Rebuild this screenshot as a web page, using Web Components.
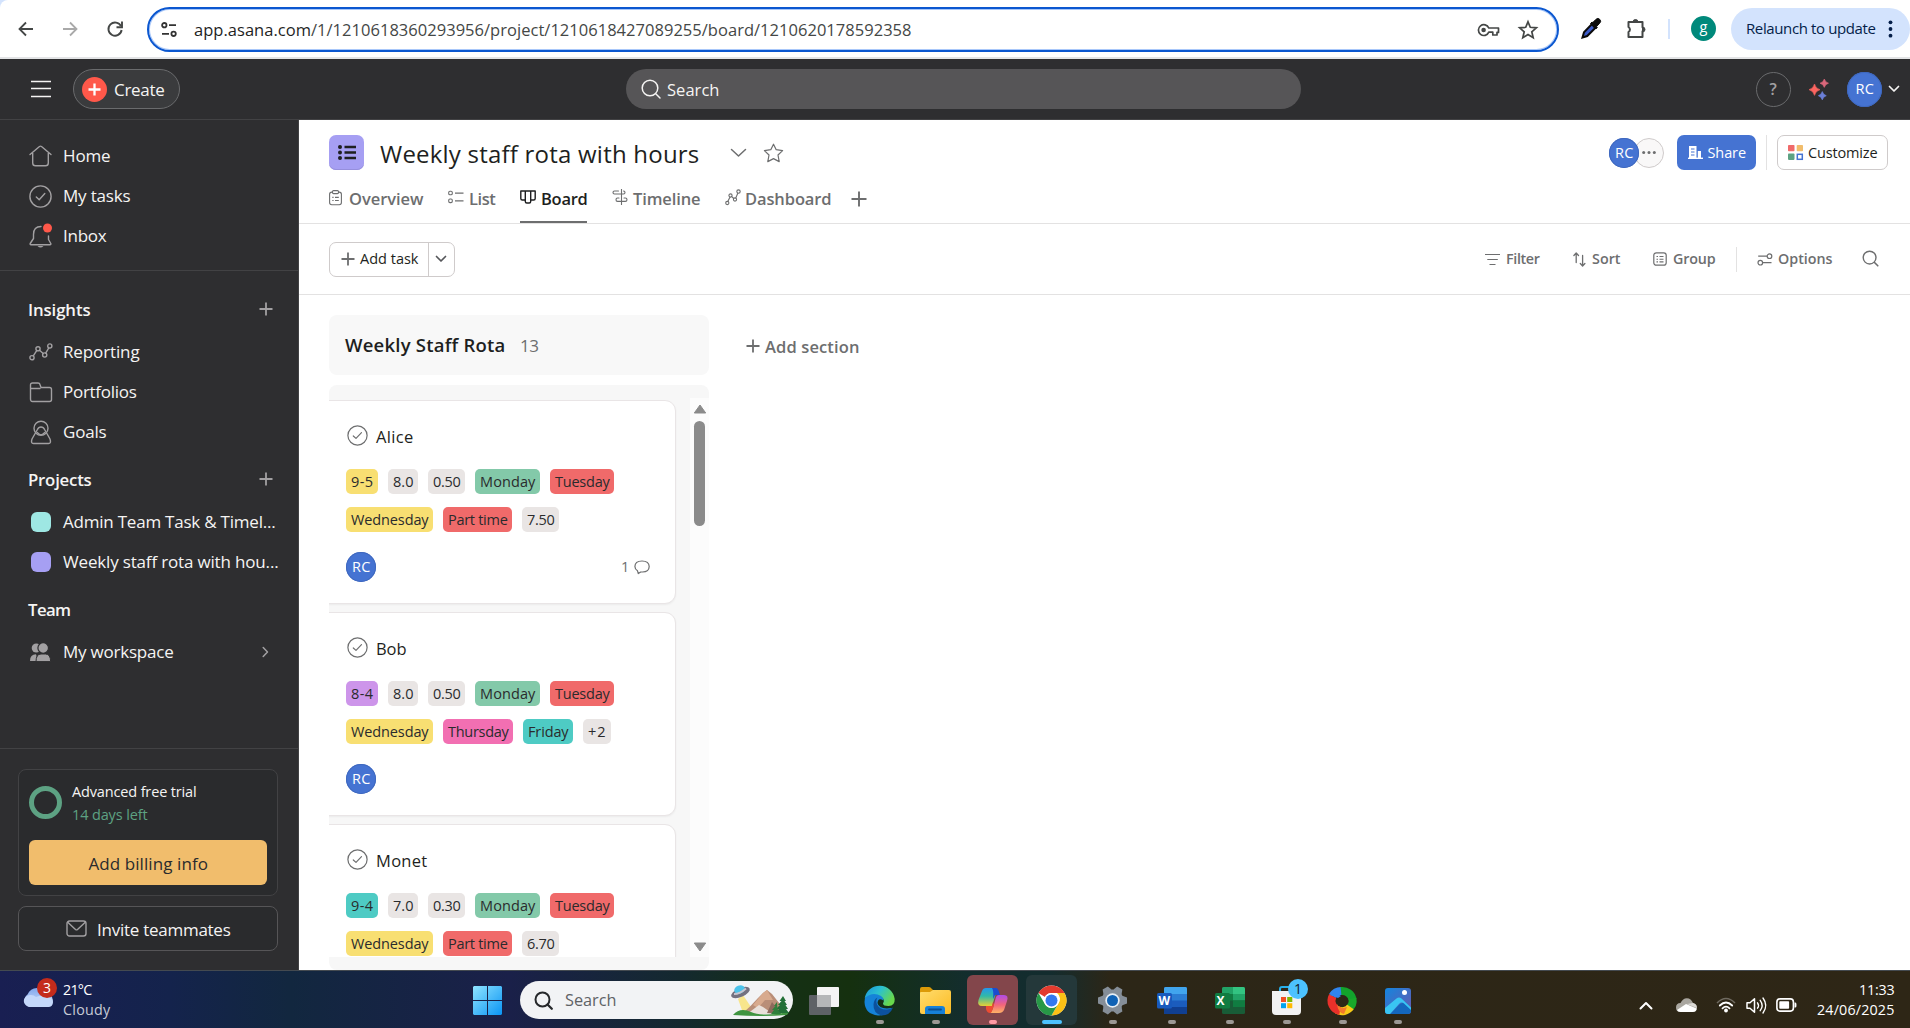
<!DOCTYPE html>
<html lang="en">
<head>
<meta charset="utf-8">
<title>Weekly staff rota with hours</title>
<style>
html,body{margin:0;height:100%;overflow:hidden}
body{font-family:"Open Sans","Noto Sans",sans-serif;background:#fff}
</style>
</head>
<body>
<rota-app></rota-app>
<script>
const def=(name,html,init)=>customElements.define(name,class extends HTMLElement{
  constructor(){super();this.attachShadow({mode:"open"})}
  connectedCallback(){
    if(this.shadowRoot.childNodes.length)return;
    const t=document.createElement("template");
    t.innerHTML=typeof html==="function"?html(this):html;
    this.shadowRoot.append(t.content.cloneNode(true));
    if(init)init(this);
  }
});

/* Each entry: width, height, SVG body. Strokes use currentColor. */
const S=(d,w=1.5)=>`<path d="${d}" fill="none" stroke="currentColor" stroke-width="${w}" stroke-linecap="round" stroke-linejoin="round"/>`;
const dot=(x,y,r,w=1.4)=>`<circle cx="${x}" cy="${y}" r="${r}" fill="none" stroke="currentColor" stroke-width="${w}"/>`;
const box=(x,y,w,h,s=1.3,r=1)=>`<rect x="${x}" y="${y}" width="${w}" height="${h}" rx="${r}" fill="none" stroke="currentColor" stroke-width="${s}"/>`;
const ICONS={
 back:[16,16,`<path d="M15 8H2M8 1.500L1.500 8L8 14.500" fill="none" stroke="currentColor" stroke-width="1.800"/>`],
 fwd:[16,16,`<path d="M1 8H14M8 1.500L14.500 8L8 14.500" fill="none" stroke="currentColor" stroke-width="1.800"/>`],
 reload:[16,16,`<path d="M14 5.200A6.600 6.600 0 1 0 14.600 9" fill="none" stroke="currentColor" stroke-width="1.900"/><path d="M15 .6V6.200H9.500" fill="none" stroke="currentColor" stroke-width="1.900"/>`],
 tune:[16,15,`${dot(3.300,3.200,2.200,1.800)}${dot(12.600,11.800,2.200,1.800)}<path d="M8 3.200H15M1 11.800H8" stroke="currentColor" stroke-width="1.800"/>`],
 key:[23,14,`<path d="M11.800 5H21.500V9.400H20V12H15.800V9.200H11.800A5.400 5.400 0 1 1 11.800 5Z" fill="none" stroke="currentColor" stroke-width="1.700" stroke-linejoin="round"/><circle cx="6.600" cy="7" r="2.300" fill="currentColor"/>`],
 star:[20,20,`<path d="M10 1.800L12.300 7.300L18.400 7.800L13.800 11.800L15.200 17.800L10 14.600L4.800 17.800L6.200 11.800L1.600 7.800L7.700 7.300Z" fill="none" stroke="currentColor" stroke-width="1.700"/>`],
 starThin:[21,20,S("M10.500 1.200L13.200 6.700L19.600 7.600L15 12L16.200 18.600L10.500 15.600L4.800 18.600L6 12L1.400 7.600L7.800 6.700Z",1.2)],
 dropper:[20,21,`<path d="M11 6L3 14.300L1.500 19.500L6.200 18L14.300 10Z" fill="#3c5bc9" stroke="#0b0b0b" stroke-width="2"/><path d="M9.500 5.500L14.800 11L16.300 9.500L15.600 8.500L18.700 5.200A2.600 2.600 0 0 0 15 1.300L11.800 4.500L11 4Z" fill="#0b0b0b" stroke="#0b0b0b"/>`],
 puzzle:[21,21,`<path d="M2.500 4H16.500V9.300A2.300 2.300 0 0 1 16.500 13.300V19H2.500V14A2.900 2.900 0 0 0 2.500 9Z" fill="none" stroke="currentColor" stroke-width="2" stroke-linejoin="round"/><path d="M7 4A2.500 2.500 0 0 1 12 4ZM16.500 9A2.500 2.500 0 0 1 16.500 14Z" fill="currentColor" stroke="currentColor"/>`],
 kebab:[5,18,`<circle cx="2.500" cy="2.300" r="1.900"/><circle cx="2.500" cy="9" r="1.900"/><circle cx="2.500" cy="15.700" r="1.900"/>`],
 menu:[20,18,`<path d="M0 1.500H20M0 8.500H20M0 16.500H20" stroke="currentColor" stroke-width="1.400"/>`],
 create:[25,25,`<circle cx="12.500" cy="12.500" r="12.500" fill="#ff584a"/><path d="M12.500 6.500V18.500M6.500 12.500H18.500" stroke="#fff" stroke-width="2.300"/>`],
 search:[20,20,`${dot(9,9,7.800,1.500)}${S("M15 15L19 19")}`],
 searchBold:[19,19,`${dot(8.500,8.500,7,2)}${S("M13.500 13.500L17.800 17.800",2.3)}`],
 search2:[17,17,`${dot(7.600,7.600,6.400,1.400)}${S("M12.500 12.500L15.800 15.800",1.6)}`],
 sparkle:[20,21,`<path d="M5.500 5Q6.600 9.600 11 10.700Q6.600 11.800 5.500 16.400Q4.400 11.800 0 10.700Q4.400 9.600 5.500 5Z" fill="#fc6560" stroke="#fc6560" stroke-width=".6"/><path d="M15.300 0Q16.200 3.300 19.500 4.200Q16.200 5.100 15.300 8.400Q14.400 5.100 11 4.200Q14.400 3.300 15.300 0Z" fill="#d9677b" stroke="#d9677b" stroke-width=".6"/><path d="M13.300 12.500Q14.200 15.800 17.300 16.700Q14.200 17.600 13.300 20.900Q12.400 17.600 9.300 16.700Q12.400 15.800 13.300 12.500Z" fill="#6b7fd7" stroke="#6b7fd7" stroke-width=".6"/>`],
 chev:[12,8,S("M1.500 1.500L6 6L10.500 1.500",1.7)],
 chevL:[17,10,S("M1.500 1.500L8.500 8L15.500 1.500",1.5)],
 chevR:[7,12,S("M1.200 1.500L5.500 6L1.200 10.500",1.5)],
 plus:[14,14,`<path d="M7 .5V13.500M.5 7H13.500" stroke="currentColor" stroke-width="1.800"/>`],
 plusL:[16,16,`<path d="M8 .5V15.500M.5 8H15.500" stroke="currentColor" stroke-width="1.900"/>`],
 home:[23,22,S("M1 9.500L10.500 1.500Q11.500 .8 12.500 1.500L22 9.500M3.700 8V18Q3.700 20.800 6.500 20.800H16.500Q19.300 20.800 19.300 18V8",1.4)],
 check:[23,23,`${dot(11.500,11.500,10.600,1.4)}${S("M7.300 12L10.200 14.800L15.800 8.500",1.4)}`],
 tick:[21,21,`${dot(10.500,10.500,9.600,1.200)}${S("M6.300 11L9 13.400L14.500 7.700",1.200)}`],
 bell:[23,24,`${S("M12 2.500Q4.500 2.500 4.500 10.500V14.500L1.200 19.500Q.8 20.800 2 20.800H21Q22.200 20.800 21.800 19.500L19.500 15.500V12",1.4)}<path d="M8.500 22H14.500Q11.500 25 8.500 22Z" fill="currentColor"/><circle cx="18.500" cy="4" r="4.500" fill="#ff584a"/>`],
 report:[24,18,`${dot(3,14.700,2.100)}${dot(9,5.800,2.100)}${dot(15.700,12,2.100)}${dot(20.800,3,2.100)}${S("M4.300 12.900L7.700 7.600M10.500 7.300L14.200 10.500M16.700 10.200L19.800 4.900",1.4)}`],
 folder:[24,21,S("M1.500 17V3Q1.500 1 3.500 1H9Q10.600 1 11 2.500L12 5.500H20.500Q22.500 5.500 22.500 7.500V17.500Q22.500 19.500 20.500 19.500H3.500Q1.500 19.500 1.500 17M1.500 6.500H11",1.4)],
 goal:[22,25,`${dot(11,8.300,7,1.400)}${S("M11 7Q8.500 7 7.400 9.500L2 19Q.5 23.500 3.500 23.500H18.500Q21.500 23.500 20 19L14.600 9.500Q13.500 7 11 7Z",1.4)}${S("M7.300 12.500Q11 17 14.700 12.500",1.200)}`],
 people:[21,19,`<circle cx="6.300" cy="5" r="4.600" fill="currentColor"/><path d="M0 18Q0 11.300 6 11.300L8 18Z" fill="currentColor"/><circle cx="13.200" cy="5" r="5.300" fill="currentColor" stroke="#2e2e30" stroke-width="1.200"/><path d="M6 18.600Q6 11 11 11H15.500Q20.600 11 20.600 18.600Z" fill="currentColor" stroke="#2e2e30" stroke-width="1"/>`],
 mail:[21,17,`${box(1,1,19,15,1.4,2.5)}${S("M2 2.500L9.500 9.500Q10.500 10.300 11.500 9.500L19 2.500",1.4)}`],
 list:[18,17,`<circle cx="2" cy="3" r="2"/><circle cx="2" cy="8.500" r="2"/><circle cx="2" cy="14" r="2"/><path d="M6.500 3H18M6.500 8.500H18M6.500 14H18" stroke="currentColor" stroke-width="2.500"/>`],
 overview:[13,16,`${box(.6,2.100,11.800,12.700,1.100,2.200)}<rect x="3.500" y=".6" width="6" height="3" rx="1" fill="#fff" stroke="currentColor" stroke-width="1.100"/><path d="M3.300 7.300H4.600M6 7.300H9.800M3.300 10.500H4.600M6 10.500H9.800" stroke="currentColor" stroke-width="1.200"/>`],
 listTab:[16,15,`${box(.7,1.200,3.600,3.600,1.100,1.300)}${box(.7,9,3.600,3.600,1.100,1.300)}<path d="M7 3.100H15.500M7 10.900H15.500" stroke="currentColor" stroke-width="1.100"/>`],
 board:[16,15,`${S("M.8 1H15.200V8.500Q15.200 10 13.700 10H10.700M.8 1V8.500Q.8 10 2.300 10H5.300M5.300 1V11.500Q5.300 13 6.800 13H9.200Q10.700 13 10.700 11.500V1",1.400)}`],
 timeline:[16,17,`<path d="M9.500 0V16" stroke="currentColor" stroke-width="1.100"/>${S("M6.500 2H2.500Q1 2 1 3.500T2.500 5H11.500Q13 5 13 3.500T11.500 2M7 9H5.500Q4 9 4 10.700T5.500 12.400H13.300Q15 12.400 15 10.700T13.300 9H12",1.100)}`],
 dash:[16,17,`${dot(2.300,14,1.600,1.100)}${dot(5.500,6.500,1.600,1.100)}${dot(10,10.500,1.600,1.100)}${dot(13.500,2.600,1.700,1.100)}${S("M2.900 12.300L4.900 8.200M6.800 7.700L8.700 9.500M10.800 8.900L12.800 4.300",1.100)}`],
 share:[15,13,`<path d="M1 12V0H8.500V12ZM9.800 12V5H13V12Z" fill="currentColor"/><path d="M0 12.300H15" stroke="currentColor" stroke-width="1.400"/><path d="M3 3H6.500M3 6H6.500M3 9H6.500" stroke="#4573d2" stroke-width="1.200"/>`],
 custom:[15,15,`<rect width="6.500" height="6.300" rx=".8" fill="#f06a6a"/><rect x="8.700" width="6.300" height="6.300" rx=".8" fill="#f1bd6c"/><rect y="8.600" width="6.500" height="6.300" rx=".8" fill="#5da283"/><rect x="9.300" y="9.300" width="5" height="5" fill="#fff" stroke="#4573d2" stroke-width="1.500"/>`],
 filter:[15,13,`<path d="M0 1.500H15M2.300 6.500H12.800M4.500 11.500H10.500" stroke="currentColor" stroke-width="1.200"/>`],
 sort:[13,15,S("M3.200 10.500V1.200M.9 3.500L3.200 1L5.500 3.500M9.600 3.500V13.800M7.300 11.500L9.600 14L11.900 11.500",1.300)],
 group:[14,14,`${box(.8,.8,12.400,12.400,1.200,2.500)}<path d="M3.500 4.500H5M6.500 4.500H10.500M3.500 7.200H5M6.500 7.200H10.500M3.500 9.900H5M6.500 9.900H10.500" stroke="currentColor" stroke-width="1.100"/>`],
 options:[16,13,`${dot(12.500,3.200,2.300,1.200)}${dot(3.300,9.700,2.300,1.200)}<path d="M1.200 3.200H10M5.800 9.700H14.500" stroke="currentColor" stroke-width="1.200"/>`],
 bubble:[16,15,S("M4.300 13.600L3.500 10.800Q.9 9 .9 6.500Q1 1 8 1T15.200 6.500Q15 12 8.500 12Q7.500 12 6.700 12Z",1.200)],
 dots:[14,3,`<circle cx="1.700" cy="1.500" r="1.500"/><circle cx="7" cy="1.500" r="1.500"/><circle cx="12.300" cy="1.500" r="1.500"/>`],
 up:[14,10,`<path d="M7 1L12.700 9H1.300Z" fill="currentColor" stroke="currentColor" stroke-linejoin="round"/>`],
 down:[14,10,`<path d="M7 9L12.700 1H1.300Z" fill="currentColor" stroke="currentColor" stroke-linejoin="round"/>`],
 cloud:[31,24,`<defs><linearGradient id="g" x2="0" y2="1"><stop stop-color="#7fa6ec"/><stop offset="1" stop-color="#d5e3fb"/></linearGradient></defs><path d="M7 23A7 7 0 0 1 4.500 10.500A11 11 0 0 1 24 9.500A7 7 0 0 1 25 23Z" fill="url(#g)"/><path d="M7 23A7 6 0 1 1 13 13Q20 10 23 13Q30 13 30 18T25 23Z" fill="#c4d8fa"/>`],
 win:[29,29,`<defs><linearGradient id="g" gradientUnits="userSpaceOnUse" x1="0" y1="0" x2="29" y2="29"><stop stop-color="#8fe4ff"/><stop offset="1" stop-color="#0a94f4"/></linearGradient></defs><path d="M1 0H14V14H0V1ZM15 0H28L29 1V14H15ZM0 15H14V29H1L0 28ZM15 15H29V28L28 29H15Z" fill="url(#g)"/>`],
 scene:[58,31,`<path d="M12 10L7 14L12 28L22 25Z" fill="#f8e58c"/><path d="M12 28Q20 21 27 13L32 8L36 5L41 9L56 28Z" fill="#b98e78"/><path d="M22 20L32 8L36 5L42 15L34 15L27 23Z" fill="#d8aa8e"/><path d="M16 29L28 20L32 22L42 29Z" fill="#e9e0da"/><path d="M36 28L41 17L50 29Z" fill="#8d6a5d"/><path d="M2 30Q9 22 20 27T58 27L56 30Q30 32 2 30Z" fill="#3f9440"/><path d="M52 11L48.500 16H50.500L47 20H49L45 24H48L44 28H58L55 24H57L54.500 20H56L53.500 16H55Z" fill="#237038"/><path d="M46 17L43 21H44.500L41 25H43L40 29H50L46.500 24Z" fill="#2f7f3b"/><ellipse cx="9.500" cy="7.500" rx="10" ry="4.500" transform="rotate(-24 9.500 7.500)" fill="#74717f"/><ellipse cx="8.500" cy="4.500" rx="5.500" ry="4" transform="rotate(-22 8.500 4.500)" fill="#4cc3ea"/><path d="M3 9Q9 9 15 3.500" fill="none" stroke="#c8c5d0" stroke-width="1.800"/>`],
 taskview:[30,28,`<rect y="8" width="22" height="20" rx="1" fill="#5e6266"/><rect x="8" width="22" height="20" rx="1" fill="#f4f4f4"/><path d="M8 8H22V20H8Z" fill="#b5b7b8"/>`],
 edge:[31,31,`<defs><linearGradient id="g" x2="1" y2=".5"><stop stop-color="#1a91df"/><stop offset=".5" stop-color="#2bc1cf"/><stop offset="1" stop-color="#68d84c"/></linearGradient></defs><path d="M.5 17Q0 7 11 8Q20 9 19.500 15.500Q14 12 13.500 18Q15 25 28 23Q23 31 14 30.500Q1 29 .5 17Z" fill="#1583d8"/><path d="M.7 13A15.200 15.200 0 0 1 30.700 14Q31 21 24.500 21Q19 21 19 18.500Q21.500 14.500 17 11Q9 6 .7 13Z" fill="url(#g)"/><path d="M13.500 12.500Q11.500 15 13 19.500Q16 25 23 24.500Q26 24.300 29 22.500Q26 30.500 17.500 30.500Q9 28 9.500 19.500Q10 14 13.500 12.500Z" fill="#0c519c"/>`],
 folderWin:[31,27,`<defs><linearGradient id="g" x2="1" y2="1"><stop stop-color="#ffdc6e"/><stop offset="1" stop-color="#fcbb22"/></linearGradient></defs><path d="M0 2Q0 0 2 0H9Q10.500 0 12 2L14 4H28V12H0Z" fill="#dc9a08"/><path d="M0 6Q0 5 1 5H10L13 3H29Q31 3 31 5V25Q31 27 29 27H2Q0 27 0 25Z" fill="url(#g)"/><path d="M5 27V22Q5 19 8 19H22Q25 19 25 22V27Z" fill="#1681d8"/><path d="M9 22.500H21" stroke="#0b4f90" stroke-width="1.800" stroke-linecap="round"/>`],
 copilot:[30,26,`<defs><linearGradient id="g" x2="0" y2="1"><stop stop-color="#2496ee"/><stop offset=".45" stop-color="#31b9a7"/><stop offset="1" stop-color="#e7cf35"/></linearGradient><linearGradient id="h" x2="0" y2="1"><stop stop-color="#b04be8"/><stop offset=".55" stop-color="#f2657b"/><stop offset="1" stop-color="#ffb365"/></linearGradient></defs><path d="M8 0H17Q20 0 18 5L14 18H4Q-1 18 .5 12L4 3Q5 0 8 0Z" fill="url(#g)"/><path d="M14 0H18Q20 0 21 4L22 7H17L15 11Q16 3 14 0Z" fill="#1b4bcf"/><path d="M21 7H26Q31 7 29 13L26 22Q24.500 25 21 25H12Q14 24 15 20L18 9Q19 7 21 7Z" fill="url(#h)"/><path d="M8 18H14L15 14L16 17L14 23Q13.500 25 12 25Q9 25 8 21Z" fill="#ee4c32"/>`],
 chrome:[31,31,`<circle cx="15.500" cy="15.500" r="15" fill="#fff"/><path d="M2.500 8A15 15 0 0 1 28.500 8H15.500A7.500 7.500 0 0 0 9 12Z" fill="#e33b2e"/><path d="M28.500 8A15 15 0 0 1 15.500 30.500L22 19.200A7.500 7.500 0 0 0 21 8Z" fill="#fbc116"/><path d="M2.500 8A15 15 0 0 0 15.500 30.500L21.500 20A7.500 7.500 0 0 1 9 19.200Z" fill="#279847"/><circle cx="15.500" cy="15.500" r="7.500" fill="#fff"/><circle cx="15.500" cy="15.500" r="6" fill="#3478ee"/>`],
 gear:[31,29,`<g fill="#858e98">${[30,90,150].map(a=>`<path d="M11 4L12.500 0H18.500L20 4V25L18.500 29H12.500L11 25Z" transform="rotate(${a} 15.500 14.500)"/>`).join("")}<circle cx="15.500" cy="14.500" r="11"/></g><circle cx="15.500" cy="14.500" r="7.200" fill="#e6eef5"/><circle cx="15.500" cy="14.500" r="5.500" fill="#0f62b5"/>`],
 word:[30,27,`<rect x="7" width="23" height="27" rx="1.500" fill="#1b5cbd"/><path d="M7 1.500Q7 0 8.500 0H28.500Q30 0 30 1.500V7H7Z" fill="#41a5ee"/><path d="M7 7H30V13.500H7Z" fill="#2b7cd3"/><path d="M7 20H30V25.500Q30 27 28.500 27H8.500Q7 27 7 25.500Z" fill="#103f91"/><rect y="6" width="15" height="15.500" rx="1.500" fill="#185abd"/>`],
 excel:[30,27,`<rect x="7" width="23" height="27" rx="1.500" fill="#185c37"/><path d="M7 1.500Q7 0 8.500 0H18V7H7Z" fill="#21a366"/><path d="M18 0H28.500Q30 0 30 1.500V7H18Z" fill="#33c481"/><path d="M7 7H18V13.500H7Z" fill="#107c41"/><path d="M18 7H30V13.500H18Z" fill="#21a366"/><path d="M18 13.500H30V20H18Z" fill="#107c41"/><rect y="6" width="15" height="15.500" rx="1.500" fill="#107c41"/>`],
 store:[29,29,`<path d="M8 6V3Q8 1 10 1H19Q21 1 21 3V6" fill="none" stroke="#28afea" stroke-width="2"/><path d="M0 5H29V25Q29 29 25 29H4Q0 29 0 25Z" fill="#f2f2f2"/><path d="M9 11H14V16H9Z" fill="#f25022"/><path d="M15.200 11H20.300V16H15.200Z" fill="#7fba00"/><path d="M9 17.200H14V22.200H9Z" fill="#00a4ef"/><path d="M15.200 17.200H20.300V22.200H15.200Z" fill="#ffb900"/>`],
 swirl:[29,28,`<g fill="none" stroke-width="8"><path d="M4.500 9A10.300 10.300 0 0 1 14 4" stroke="#2f85ee"/><path d="M13 4A10.300 10.300 0 0 1 24.500 12.500" stroke="#12a32c"/><path d="M24.500 11.500A10.300 10.300 0 0 1 20 22" stroke="#19a82a"/><path d="M22.500 20A10.300 10.300 0 0 1 9 22.800" stroke="#f9c917"/><path d="M12 24A10.300 10.300 0 0 1 4.700 9" stroke="#e9302a"/></g><path d="M1.500 8Q8 5 13 9L10 11Q6 9 1.500 8Z" fill="#2f85ee"/><path d="M9 17Q12 23 19 20L16 27Q10 26 9 17Z" fill="#f4792b"/>`],
 photos:[26,26,`<defs><linearGradient id="g" x2="1" y2="1"><stop stop-color="#1385df"/><stop offset="1" stop-color="#6a58ad"/></linearGradient></defs><rect width="26" height="26" rx="3" fill="url(#g)"/><path d="M5 26L15 16L20 14L26 20V23Q26 26 23 26Z" fill="#1467bd"/><path d="M0 20L11.500 10.500Q14 8.500 16.500 10.500L26 19.500V22L19 15.500Q16.500 13.500 14 16L5 26H3Q0 26 0 23Z" fill="#39c5f3"/><circle cx="19.500" cy="4.500" r="2.500" fill="#fff"/>`],
 trayUp:[14,9,S("M1.500 7.500L7 2L12.500 7.500",2)],
 onedrive:[21,14,`<path d="M4.500 14Q0 14 0 9.500T4.500 5Q7 0 11 .2T17 5Q21 6 21 9.700T17 14Z" fill="#a9a69f"/><path d="M1 12L10 6L20.500 10.500Q20.500 14 16.500 14H4.500Q2 14 1 12Z" fill="#fff"/><path d="M11 6L17 5Q21 6 20.800 10Z" fill="#dcdad6"/>`],
 wifi:[20,16,`<path d="M1 6Q10-3 19 6" fill="none" stroke="#6f6a60" stroke-width="1.600"/>${S("M3.800 8.500Q10 2.500 16.200 8.500M6.500 11.300Q10 8 13.500 11.300",1.8)}<circle cx="10" cy="13.500" r="1.900" fill="currentColor"/>`],
 sound:[21,17,`${S("M1 5.800H4L8.500 1.800V15.200L4 11.200H1Z",1.5)}${S("M11.500 5.800Q13.500 8.500 11.500 11.200M14.200 3.300Q18 8.500 14.200 13.700M17 1Q22.500 8.500 17 16",1.4)}`],
 battery:[21,14,`${box(.9,.9,16.500,12.200,1.6,3)}<rect x="3.300" y="3.300" width="9.800" height="7.400" rx=".8" fill="currentColor"/><path d="M18.500 4.500H19.500Q20.500 4.500 20.500 7T19.500 9.500H18.500Z" fill="currentColor"/>`]
};

def("ui-icon",h=>{const [w,ht,b]=ICONS[h.getAttribute("name")];
 return `<style>:host{display:block;flex:none;width:${w}px;height:${ht}px}svg{display:block;overflow:visible}</style><svg width="${w}" height="${ht}" viewBox="0 0 ${w} ${ht}" fill="currentColor">${b}</svg>`});

/* Single line of text, tracked so that it fills the width given in "w". */
def("ui-text",h=>`<style>:host{display:block;flex:none;white-space:nowrap;padding-top:1px;font-size:${h.getAttribute("s")||17}px;font-weight:${h.getAttribute("b")||400};line-height:1.300;width:${h.getAttribute("w")}px}span{display:inline-block}</style><span><slot></slot></span>`,
 h=>queueMicrotask(()=>{const s=h.shadowRoot.querySelector("span"),w=+h.getAttribute("w"),n=h.textContent.length;
  if(w&&n)s.style.letterSpacing=((w+.5-s.getBoundingClientRect().width)/n).toFixed(3)+"px";}));

def("user-avatar",h=>{const d=h.getAttribute("size")||30;return `<style>:host{display:flex;flex:none;align-items:center;justify-content:center;width:${d}px;height:${d}px;border-radius:50%;background:#4573d2;box-shadow:inset 0 0 0 1px #3f68be;color:#fff}</style><ui-text s="14.500" w="18">RC</ui-text>`});

def("browser-bar",`<style>
:host{display:block;height:57px;background:#d3e3fd;border-bottom:2px solid #e3e4e6;color:#444746}
.bar{box-sizing:border-box;height:57px;background:#fff;border-radius:8px 0 0 0;display:flex;align-items:center;padding-left:18px}
.addr{box-sizing:border-box;width:1412px;height:45px;border:2px solid #0b57d0;border-radius:23px;margin:2px 0 0 24px;padding-left:12px;display:flex;align-items:center;box-shadow:inset 0 0 0 1px #a8c7fa}
.pill{display:flex;align-items:center;box-sizing:border-box;width:179px;height:42px;border-radius:21px;background:#d3e3fd;color:#041e49;padding-left:15px;margin-left:15px}
.g{width:25px;height:25px;border-radius:50%;background:#00897b;color:#fff;display:flex;align-items:center;justify-content:center;margin-left:21px}
.sep{width:2px;height:20px;background:#d3e3fd;margin-left:21px}
</style><div class="bar">
<ui-icon name="back"></ui-icon><ui-icon name="fwd" style="margin-left:28px;color:#a9a9a9"></ui-icon><ui-icon name="reload" style="margin-left:29px"></ui-icon>
<div class="addr"><ui-icon name="tune" style="color:#333"></ui-icon><ui-text w="717" s="16.500" style="margin-left:17px"><span style="color:#1f1f1f">app.asana.com</span>/1/1210618360293956/project/1210618427089255/board/1210620178592358</ui-text>
<ui-icon name="key" style="margin-left:566px"></ui-icon><ui-icon name="star" style="margin-left:18px"></ui-icon></div>
<ui-icon name="dropper" style="margin-left:22px"></ui-icon><ui-icon name="puzzle" style="margin-left:25px"></ui-icon><div class="sep"></div>
<div class="g"><ui-text s="14.500" w="8" style="margin-top:-4px">g</ui-text></div>
<div class="pill"><ui-text s="15" w="129">Relaunch to update</ui-text><ui-icon name="kebab" style="margin-left:13px"></ui-icon></div>
</div>`);

def("app-header",`<style>
:host{display:flex;align-items:center;box-sizing:border-box;height:61px;background:#2e2e30;border-bottom:1px solid #424244;color:#f5f4f3;padding-left:31px}
.create{display:flex;align-items:center;box-sizing:border-box;width:107px;height:40px;border:1px solid #6a6b6d;border-radius:20px;background:#3a3b3d;margin-left:22px;padding-left:8px}
.search{display:flex;align-items:center;box-sizing:border-box;width:675px;height:40px;border-radius:20px;background:#565557;margin-left:446px;padding-left:15px}
.help{display:flex;align-items:center;justify-content:center;box-sizing:border-box;width:35px;height:35px;border:1px solid #6a6b6d;border-radius:50%;margin-left:455px;color:#a2a0a2}
</style><ui-icon name="menu"></ui-icon>
<div class="create"><ui-icon name="create"></ui-icon><ui-text w="50" style="margin:1px 0 0 7px">Create</ui-text></div>
<div class="search"><ui-icon name="search"></ui-icon><ui-text w="52" s="16.500" style="margin-left:6px">Search</ui-text></div>
<div class="help"><ui-text s="16" b="600" w="8">?</ui-text></div>
<ui-icon name="sparkle" style="margin-left:18px"></ui-icon>
<user-avatar size="35" style="margin-left:18px"></user-avatar>
<ui-icon name="chev" style="margin-left:6px"></ui-icon>`);

def("side-link",h=>`<style>
:host{display:flex;align-items:center;height:40px;padding-left:28px;color:#f5f4f3}
.ic{width:25px;display:flex;justify-content:center;color:#a2a0a2;flex:none}
.sq{width:20px;height:20px;border-radius:6px;background:${h.getAttribute("color")}}
ui-text{margin:-1px 0 0 10px}.c{margin-left:auto;margin-right:29px;color:#a2a0a2}
</style><div class="ic">${h.hasAttribute("icon")?`<ui-icon name="${h.getAttribute("icon")}"></ui-icon>`:`<div class="sq"></div>`}</div><ui-text w="${h.getAttribute("w")}">${h.textContent.replace("&","&amp;")}</ui-text>${h.hasAttribute("more")?`<ui-icon class="c" name="chevR"></ui-icon>`:""}`);

def("side-heading",h=>`<style>:host{display:flex;align-items:center;justify-content:space-between;height:40px;padding:0 25px 0 28px;color:#f5f4f3}ui-icon{color:#a2a0a2;margin-top:-2px}ui-text{margin-top:-1px}</style><ui-text b="600" s="16.800" w="${h.getAttribute("w")}">${h.textContent}</ui-text>${h.hasAttribute("add")?`<ui-icon name="plus"></ui-icon>`:""}`);

def("side-bar",`<style>
:host{display:flex;flex-direction:column;box-sizing:border-box;width:299px;flex:none;background:#2e2e30;border-right:1px solid #424244;color:#f5f4f3}
.a{padding:16px 0 14px;border-bottom:1px solid #424244}
.b{flex:1;padding-top:19px}
.f{box-sizing:border-box;height:222px;border-top:1px solid #424244;padding:20px 20px 0 18px}
.card{box-sizing:border-box;height:127px;border:1px solid #424244;border-radius:8px;background:#2a2b2d;padding:15px 10px 0}
.row{display:flex;align-items:center;gap:10px;height:46px;margin-top:-5px}
.ring{box-sizing:border-box;width:33px;height:33px;border:5px solid #5da283;border-radius:50%;margin-top:-2px}
.lines{display:flex;flex-direction:column;gap:3px}
.btn{display:flex;align-items:center;justify-content:center;box-sizing:border-box;height:45px;border-radius:6px}
.bill{background:#f1bd6c;color:#2a2b2d;margin-top:14px}
.inv{border:1px solid #565557;border-radius:8px;background:#2a2b2d;margin-top:10px;gap:10px}
</style>
<div class="a"><side-link icon="home" w="47">Home</side-link><side-link icon="check" w="67">My tasks</side-link><side-link icon="bell" w="43">Inbox</side-link></div>
<div class="b">
<side-heading w="62" add>Insights</side-heading><div style="height:2px"></div>
<side-link icon="report" w="76">Reporting</side-link><side-link icon="folder" w="73">Portfolios</side-link><side-link icon="goal" w="43">Goals</side-link>
<div style="height:8px"></div><side-heading w="63" add>Projects</side-heading><div style="height:2px"></div>
<side-link color="#9ee7e3" w="212">Admin Team Task &amp; Timel...</side-link><side-link color="#a69ff3" w="215">Weekly staff rota with hou...</side-link>
<div style="height:8px"></div><side-heading w="42">Team</side-heading><div style="height:2px"></div>
<side-link icon="people" w="110" more>My workspace</side-link></div>
<div class="f"><div class="card"><div class="row"><div class="ring"></div><div class="lines"><ui-text s="14.500" w="124">Advanced free trial</ui-text><ui-text s="14.500" w="75" style="color:#5da283">14 days left</ui-text></div></div>
<div class="btn bill"><ui-text w="119" style="margin-top:2px">Add billing info</ui-text></div></div>
<div class="btn inv"><ui-icon name="mail" style="color:#a2a0a2"></ui-icon><ui-text w="133" style="margin-top:2px">Invite teammates</ui-text></div></div>`);

def("tab-item",h=>`<style>:host{display:flex;align-items:center;box-sizing:border-box;height:49px;gap:5px;color:#6d6e6f;${h.hasAttribute("active")?"color:#1e1f21;border-bottom:2px solid #6d6e6f":"padding-bottom:2px"}}ui-text{margin-top:1px}</style><ui-icon name="${h.getAttribute("icon")}"></ui-icon><ui-text b="600" s="16.500" w="${h.getAttribute("w")}">${h.textContent}</ui-text>`);

def("project-header",`<style>
:host{display:block;box-sizing:border-box;height:104px;border-bottom:1px solid #e3e2e2;padding:15px 22px 0 30px;color:#1e1f21}
.top,.tabs{display:flex;align-items:center}.top{height:35px}
.pi{width:35px;height:35px;border-radius:7px;background:#a69ff3;display:flex;align-items:center;justify-content:center;color:#1e1f21;box-shadow:inset 0 -1px #968fdd}
.dots{display:flex;align-items:center;justify-content:center;box-sizing:border-box;width:30px;height:30px;border:1px solid #cfcbcb;border-radius:50%;background:#f9f8f8;color:#6d6e6f;margin-left:-5px}
user-avatar{z-index:1;margin-left:auto}
.btn{display:flex;align-items:center;justify-content:center;box-sizing:border-box;height:35px;border-radius:7px;gap:5px}
.share{width:79px;background:#4573d2;color:#fff;margin-left:13px}
.cust{width:111px;border:1px solid #cfcbcb;margin-left:10px}
.sep{width:1px;height:35px;background:#e3e2e2;margin-left:10px}
.tabs{height:49px;margin-top:4px}
</style>
<div class="top"><div class="pi"><ui-icon name="list"></ui-icon></div><ui-text s="24" b="500" w="319" style="margin:1px 0 0 16px">Weekly staff rota with hours</ui-text>
<ui-icon name="chevL" style="margin-left:31px;color:#6d6e6f"></ui-icon><ui-icon name="starThin" style="margin-left:16px;color:#6d6e6f"></ui-icon>
<user-avatar></user-avatar><div class="dots"><ui-icon name="dots"></ui-icon></div>
<div class="btn share"><ui-icon name="share"></ui-icon><ui-text s="14.500" w="38">Share</ui-text></div><div class="sep"></div>
<div class="btn cust"><ui-icon name="custom"></ui-icon><ui-text s="14.500" w="69">Customize</ui-text></div></div>
<div class="tabs"><tab-item icon="overview" style="gap:7px" w="74">Overview</tab-item><tab-item icon="listTab" w="26" style="margin-left:25px">List</tab-item><tab-item active icon="board" w="46" style="margin-left:25px">Board</tab-item><tab-item icon="timeline" w="67" style="margin-left:25px">Timeline</tab-item><tab-item icon="dash" w="86" style="margin-left:25px;gap:4px">Dashboard</tab-item><ui-icon name="plusL" style="margin:0 0 0 20px;color:#6d6e6f"></ui-icon></div>`);

def("view-toolbar",`<style>
:host{display:flex;align-items:center;box-sizing:border-box;height:71px;border-bottom:1px solid #e3e2e2;padding:0 31px 0 30px;color:#6d6e6f}
.add{display:flex;align-items:center;box-sizing:border-box;width:126px;height:35px;border:1px solid #cfcbcb;border-radius:7px;padding-left:11px;margin:0 auto 0 0}
.add i{width:1px;height:33px;background:#cfcbcb;margin:0 6px 0 10px}
.sep{width:1px;height:25px;background:#e3e2e2;margin:0 20px 0 21px}
ui-text{margin-top:-1px}
</style><div class="add"><ui-icon name="plus"></ui-icon><ui-text s="14.500" w="58" style="margin-left:5px;color:#1e1f21">Add task</ui-text><i></i><ui-icon name="chev" style="color:#55565a"></ui-icon></div>
<ui-icon name="filter"></ui-icon><ui-text s="14.300" b="600" w="33" style="margin:-1px 34px 0 6px">Filter</ui-text>
<ui-icon name="sort"></ui-icon><ui-text s="14.300" b="600" w="28" style="margin:-1px 33px 0 6px">Sort</ui-text>
<ui-icon name="group"></ui-icon><ui-text s="14.300" b="600" w="42" style="margin:-1px 0 0 6px">Group</ui-text><div class="sep"></div>
<ui-icon name="options"></ui-icon><ui-text s="14.300" b="600" w="54" style="margin:-1px 30px 0 5px">Options</ui-text><ui-icon name="search2" style="margin-top:-1px"></ui-icon>`);

const TAGW={"9-5":[32,"#f8df72"],"8-4":[32,"#cd95ea"],"9-4":[32,"#4ecbc4"],"8.0":[30],"7.0":[30],"0.50":[37],"0.30":[37],"7.50":[37],"6.70":[37],"+2":[28],Monday:[65,"#83c9a9"],Tuesday:[64,"#f06a6a"],Wednesday:[87,"#f8df72"],"Part time":[69,"#f06a6a"],Thursday:[70,"#f26fb2"],Friday:[50,"#4ecbc4"]};
def("task-tag",h=>{const [w,c="#e9e5e4"]=TAGW[h.textContent];return `<style>:host{display:flex;align-items:center;justify-content:center;flex:none;width:${w}px;height:25px;border-radius:5px;background:${c};color:#2a2b2d}</style><ui-text s="14.500" w="${w-10}">${h.textContent}</ui-text>`});

def("task-card",h=>{const row=a=>`<div class="tags">${h.getAttribute(a).split(",").map(t=>`<task-tag>${t}</task-tag>`).join("")}</div>`;
const comments=h.hasAttribute("comments")?`<div class="cm"><ui-text s="14.500" w="8">${h.getAttribute("comments")}</ui-text><ui-icon name="bubble"></ui-icon></div>`:"";
return `<style>
:host{display:block;flex:none;box-sizing:border-box;height:204px;width:358px;margin:0 0 8px -11px;border:1px solid #e9e5e6;border-radius:11px;background:#fff;box-shadow:0 1px 2px #0000000d;color:#1e1f21;padding:24px 25px 0 27px}
.name,.tags,.foot{display:flex;align-items:center}.name{height:21px;gap:8px;margin-bottom:23px;padding-left:1px}
.name ui-icon{color:#6d6e6f}.tags{height:25px;gap:10px;margin-bottom:13px}.foot{height:30px;margin-top:20px;color:#6d6e6f}
.cm{display:flex;align-items:center;gap:5px;margin-left:auto}
</style><div class="name"><ui-icon name="tick"></ui-icon><ui-text s="16.500" w="${h.getAttribute("w")}" style="margin-top:1px">${h.getAttribute("name")}</ui-text></div>${row("one")}${row("two")}${h.hasAttribute("bare")?"":`<div class="foot"><user-avatar></user-avatar>${comments}</div>`}`});

def("board-view",`<style>
:host{display:flex;flex:1;min-height:0;padding:20px 0 0 30px;color:#1e1f21}
.col{width:380px;display:flex;flex-direction:column;min-height:0}
.head{display:flex;align-items:center;box-sizing:border-box;height:60px;flex:none;background:#f8f8f8;border-radius:8px;padding-left:16px;gap:15px}
.body{flex:1;min-height:0;box-sizing:border-box;margin-top:10px;background:#f7f7f7;border-radius:8px;padding:13px 0;display:flex;overflow:hidden}
.list{flex:1;overflow:hidden;padding-top:2px;display:flex;flex-direction:column}
.scroll{width:19px;background:#fcfcfc;color:#8b8b8b;display:flex;flex-direction:column;align-items:center;box-sizing:border-box;padding:6px 0 5px}
.thumb{width:11px;height:105px;border-radius:6px;background:#8b8b8b;margin:7px 0 auto}
.add{display:flex;align-items:center;height:60px;margin:2px 0 0 37px;gap:5px;color:#6d6e6f}
</style><div class="col"><div class="head"><ui-text b="600" s="18.500" w="160">Weekly Staff Rota</ui-text><ui-text s="17" w="18" style="color:#6d6e6f;margin-top:1px">13</ui-text></div>
<div class="body"><div class="list">
<task-card name="Alice" w="37" one="9-5,8.0,0.50,Monday,Tuesday" two="Wednesday,Part time,7.50" comments="1"></task-card>
<task-card name="Bob" w="30" one="8-4,8.0,0.50,Monday,Tuesday" two="Wednesday,Thursday,Friday,+2"></task-card>
<task-card name="Monet" w="51" one="9-4,7.0,0.30,Monday,Tuesday" two="Wednesday,Part time,6.70" bare></task-card>
</div><div class="scroll"><ui-icon name="up"></ui-icon><div class="thumb"></div><ui-icon name="down"></ui-icon></div></div></div>
<div class="add"><ui-icon name="plus" style="margin-top:-2px"></ui-icon><ui-text b="600" s="16.500" w="94" style="margin-top:-1px">Add section</ui-text></div>`);

def("dock-app",h=>`<style>
:host{display:flex;flex-direction:column;align-items:center;position:relative;box-sizing:border-box;width:51px;height:50px;flex:none;border-radius:6px;background:${h.getAttribute("bg")||"none"}}
.i{height:45px;display:flex;align-items:center;margin-top:3px;margin-bottom:-3px;position:relative}
.m{width:${h.getAttribute("mark")||8}px;height:4px;border-radius:2px;background:${h.getAttribute("mc")||"#9b9894"};flex:none}
.l{position:absolute;left:2px;top:14px;color:#fff}
.bdg{position:absolute;left:27px;top:4px;width:20px;height:20px;border-radius:50%;background:#4cc2ff;color:#10202b;display:flex;align-items:center;justify-content:center}
</style><div class="i"><ui-icon name="${h.getAttribute("icon")}"></ui-icon>${h.hasAttribute("letter")?`<ui-text class="l" b="700" s="12" w="11">${h.getAttribute("letter")}</ui-text>`:""}</div>${h.getAttribute("mark")==="0"?"":`<div class="m"></div>`}${h.hasAttribute("badge")?`<div class="bdg"><ui-text s="14" w="8">${h.getAttribute("badge")}</ui-text></div>`:""}`);

def("task-bar",`<style>
:host{display:flex;box-sizing:border-box;height:58px;flex:none;border-top:1px solid #444a50;color:#fff;background:linear-gradient(90deg,#191f52 0,#14234c 170px,#12273f 290px,#1a2049 510px,#14292f 680px,#153014 790px,#15300f 850px,#132d2e 970px,#132c2e 1050px,#2c2617 1110px,#2e2616 100%);padding-left:23px}
.w{display:flex;width:450px;padding-top:9px;gap:9px;position:relative}
.w>ui-icon{margin-top:4px}
.bdg{position:absolute;left:14px;top:7px;width:20px;height:20px;border-radius:50%;background:#c42b1c;display:flex;align-items:center;justify-content:center}
.lines{display:flex;flex-direction:column}
.search{display:flex;align-items:center;box-sizing:border-box;width:273px;height:38px;border-radius:19px;background:#f2f3f5;color:#5f6266;margin:10px 0 0 18px;padding:0 4px 0 14px}
.apps{display:flex;padding-top:4px}
.tray{display:flex;align-items:center;margin-left:auto;padding:0 16px 0 0;height:68px}
.clock{display:flex;flex-direction:column;align-items:flex-end;margin:-11px 0 0 20px}
</style><div class="w"><ui-icon name="cloud"></ui-icon><div class="bdg"><ui-text s="14" w="8" style="margin-top:-1px">3</ui-text></div><div class="lines"><ui-text s="14.300" w="28">21°C</ui-text><ui-text s="14.300" w="47" style="color:#c7cbd6">Cloudy</ui-text></div></div>
<ui-icon name="win" style="margin-top:15px"></ui-icon>
<div class="search"><ui-icon name="searchBold" style="color:#26282b"></ui-icon><ui-text s="16.300" w="51" style="margin:1px auto 0 12px">Search</ui-text><ui-icon name="scene"></ui-icon></div>
<div class="apps">
<dock-app icon="taskview" mark="0" style="margin-left:5px"></dock-app>
<dock-app icon="edge" style="margin-left:5px"></dock-app>
<dock-app icon="folderWin" style="margin-left:5px"></dock-app>
<dock-app icon="copilot" bg="#83464b" mc="#ff99a4" style="margin-left:6px"></dock-app>
<dock-app icon="chrome" bg="#24383a" mark="20" mc="#4cc2ff" style="margin-left:8px"></dock-app>
<dock-app icon="gear" style="margin-left:10px"></dock-app>
<dock-app icon="word" letter="W" style="margin-left:8px"></dock-app>
<dock-app icon="excel" letter="X" style="margin-left:7px"></dock-app>
<dock-app icon="store" badge="1" style="margin-left:6px"></dock-app>
<dock-app icon="swirl" style="margin-left:5px"></dock-app>
<dock-app icon="photos" style="margin-left:4px"></dock-app></div>
<div class="tray"><ui-icon name="trayUp"></ui-icon><ui-icon name="onedrive" style="margin-left:23px"></ui-icon><ui-icon name="wifi" style="margin-left:19px"></ui-icon><ui-icon name="sound" style="margin-left:10px"></ui-icon><ui-icon name="battery" style="margin-left:9px"></ui-icon>
<div class="clock"><ui-text s="14.300" w="35">11:33</ui-text><ui-text s="14.300" w="77">24/06/2025</ui-text></div></div>`);

def("rota-app",`<style>:host{display:flex;flex-direction:column;width:1910px;height:1028px;background:#fff}.mid{display:flex;flex:1;min-height:0}main{flex:1;min-width:0;display:flex;flex-direction:column}</style>
<browser-bar></browser-bar><app-header></app-header><div class="mid"><side-bar></side-bar><main><project-header></project-header><view-toolbar></view-toolbar><board-view></board-view></main></div><task-bar></task-bar>`);
</script>
</body>
</html>
